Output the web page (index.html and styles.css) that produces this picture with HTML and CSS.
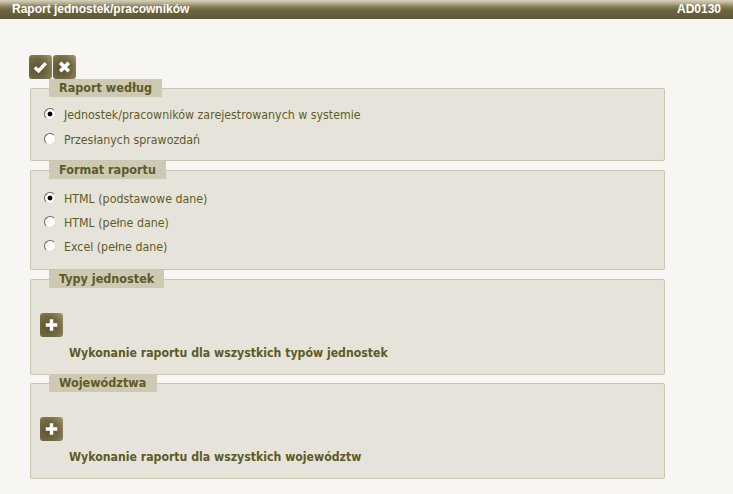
FILE: index.html
```html
<!DOCTYPE html>
<html lang="pl">
<head>
<meta charset="utf-8">
<title>Raport jednostek/pracowników</title>
<link rel="stylesheet" href="styles.css">
</head>
<body>
<header class="titlebar">
  <span>Raport jednostek/pracowników</span>
  <span>AD0130</span>
</header>
<main class="content">
  <div class="toolbar">
    <button class="iconbtn" type="button" aria-label="Zatwierdź">
      <svg viewBox="0 0 24 24" width="24" height="24"><path d="M6 12.500l4 3.500 7.500-8" fill="none" stroke="#fff" stroke-width="3.600"/></svg>
    </button>
    <button class="iconbtn" type="button" aria-label="Anuluj">
      <svg viewBox="0 0 24 24" width="24" height="24"><path d="M7.500 7.500l9 9M16.500 7.500l-9 9" fill="none" stroke="#fff" stroke-width="3.800"/></svg>
    </button>
  </div>
  <fieldset class="group group-a">
    <legend>Raport według</legend>
    <label class="opt"><input type="radio" name="a" checked>Jednostek/pracowników zarejestrowanych w systemie</label>
    <label class="opt"><input type="radio" name="a">Przesłanych sprawozdań</label>
  </fieldset>
  <fieldset class="group group-b">
    <legend class="legend-wide">Format raportu</legend>
    <label class="opt"><input type="radio" name="b" checked>HTML (podstawowe dane)</label>
    <label class="opt"><input type="radio" name="b">HTML (pełne dane)</label>
    <label class="opt"><input type="radio" name="b">Excel (pełne dane)</label>
  </fieldset>
  <fieldset class="group group-c">
    <legend class="legend-wide">Typy jednostek</legend>
    <button class="iconbtn" type="button" aria-label="Dodaj">
      <svg viewBox="0 0 24 24" width="24" height="24"><path d="M12 6v12M6 12h12" fill="none" stroke="#fff" stroke-width="3.600"/></svg>
    </button>
    <p class="note">Wykonanie raportu dla wszystkich typów jednostek</p>
  </fieldset>
  <fieldset class="group group-c">
    <legend>Województwa</legend>
    <button class="iconbtn" type="button" aria-label="Dodaj">
      <svg viewBox="0 0 24 24" width="24" height="24"><path d="M12 6v12M6 12h12" fill="none" stroke="#fff" stroke-width="3.600"/></svg>
    </button>
    <p class="note">Wykonanie raportu dla wszystkich województw</p>
  </fieldset>
</main>
</body>
</html>
```
FILE: styles.css
```css
* { box-sizing: border-box; }
html, body { margin: 0; height: 100%; overflow: hidden; }
body {
  background: #f7f6f2;
  font-family: "DejaVu Sans Condensed", "DejaVu Sans", Tahoma, sans-serif;
  font-stretch: condensed;
  color: #5d5a26;
}
.titlebar {
  height: 19px;
  padding: 2px 12px 0;
  display: flex;
  justify-content: space-between;
  font: bold 12px/14px "Liberation Sans", Arial, sans-serif;
  color: #fff;
  background: linear-gradient(#d8d2bc 0, #b9b296 3px, #8d8560 6px, #6d6540 10px, #5f5835 19px);
}
.content {
  padding: 36px 68px 0 29px;
}
.toolbar {
  display: flex;
  gap: 1px;
  height: 24px;
}
.iconbtn {
  width: 23px;
  height: 24px;
  padding: 0;
  border: 0;
  border-radius: 3px;
  background: radial-gradient(circle at 35% 60%, #5a5230 0, #746b44 55%, #a39a78 100%);
  display: flex;
  align-items: center;
  justify-content: center;
  flex: none;
}
.group {
  margin: 0 0 0 1px;
  padding: 0;
  border: 1px solid #cbc6b2;
  border-radius: 2px;
  background: #e6e4da;
  min-width: 0;
}
.group legend {
  margin-left: 18px;
  padding: 0 10px;
  height: 18px;
  min-width: 108px;
  background: #cdc9b3;
  font-size: 12.5px;
  font-weight: bold;
  line-height: 18px;
  color: #5d5a26;
}
.group legend.legend-wide { min-width: 114px; }
.group-a { height: 82px; padding-top: 5px; }
.group-b { height: 109px; padding-top: 8px; }
.group-c { height: 105px; padding: 25px 0 0 9px; margin-bottom: -1px; }
.group-c legend { margin-left: 9px; }
.group-b .opt { height: 24px; }
.group-b .opt input { margin-bottom: 3px; }
.opt {
  display: flex;
  align-items: center;
  height: 25px;
  padding-left: 13px;
  font-size: 12.3px;
  color: #5f5c28;
}
.opt input {
  appearance: none;
  width: 12px;
  height: 12px;
  margin: 0 8px 2px 0;
  border: 1px solid;
  border-color: #666 #ddd #ddd #666;
  border-radius: 50%;
  background: #fff;
}
.opt input:checked {
  background: radial-gradient(circle, #000 0, #000 2px, #fff 2.800px);
}
.note {
  margin: 9px 0 0 29px;
  font-size: 12.200px;
  font-weight: bold;
  line-height: 14px;
}
```
